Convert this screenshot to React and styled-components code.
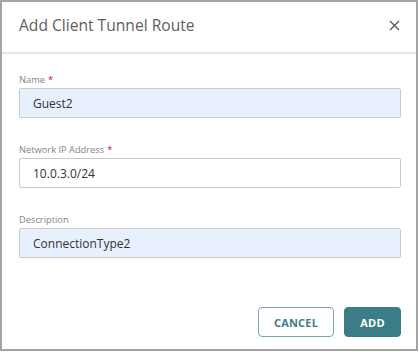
import React from "react";
import styled, { createGlobalStyle } from "styled-components";

const Global = createGlobalStyle`
  html, body { margin: 0; padding: 0; background: #ffffff; }
  body { font-family: "Open Sans", "Noto Sans", sans-serif; }
  * { box-sizing: border-box; }
`;

const Dialog = styled.div`
  width: 418px;
  height: 351px;
  border: 2px solid #a4a4a4;
  background: #fff;
  display: flex;
  flex-direction: column;
`;

const Header = styled.div`
  height: 52px;
  border-bottom: 2px solid #e6e6e6;
  display: flex;
  align-items: center;
  justify-content: space-between;
  padding: 0 14px 4px 17px;
  flex-shrink: 0;
`;

const Title = styled.h1`
  margin: 0;
  font-size: 15.6px;
  font-weight: 400;
  color: #5e5e5e;
`;

const Close = styled.button`
  border: none;
  background: none;
  padding: 0;
  width: 16px;
  height: 16px;
  display: flex;
  align-items: center;
  justify-content: center;
  cursor: pointer;
`;

const Body = styled.div`
  flex: 1;
  display: flex;
  flex-direction: column;
  padding: 19px 15px 0 17px;
`;

const Field = styled.div`
  display: flex;
  flex-direction: column;
  gap: 1px;
  margin-bottom: 25px;
`;

const Label = styled.label`
  font-size: 9.3px;
  line-height: 14px;
  color: #858585;
`;

const Star = styled.span`
  color: #d0021b;
  margin-left: 3px;
`;

const Input = styled.div`
  height: 30px;
  border: 1px solid #c9c9c9;
  border-radius: 2px;
  background: ${(p) => (p.$filled ? "#e8f0fe" : "#ffffff")};
  display: flex;
  align-items: center;
  padding-left: 13px;
  font-size: 12px;
  color: #333;
`;

const Footer = styled.div`
  display: flex;
  justify-content: flex-end;
  gap: 10px;
  padding: 0 15px 0 0;
  margin-top: 24px;
`;

const Button = styled.button`
  height: 30px;
  padding: 0;
  width: ${(p) => p.$w}px;
  border-radius: 4px;
  font-family: "Open Sans", "Noto Sans", sans-serif;
  font-weight: 700;
  font-size: 11px;
  letter-spacing: 0.2px;
  border: 1px solid ${(p) => (p.$primary ? "#3b7d86" : "#78a9b0")};
  background: ${(p) => (p.$primary ? "#3b7d86" : "#ffffff")};
  color: ${(p) => (p.$primary ? "#ffffff" : "#3b7d86")};
  cursor: pointer;
`;

const Spacer = styled.div`
  height: 12px;
`;

export default function App() {
  return (
    <>
      <Global />
      <Dialog>
        <Header>
          <Title>Add Client Tunnel Route</Title>
          <Close aria-label="Close">
            <svg width="11" height="11" viewBox="0 0 11 11">
              <path d="M1 1L10 10M10 1L1 10" stroke="#555" strokeWidth="1.3" fill="none" />
            </svg>
          </Close>
        </Header>
        <Body>
          <Field>
            <Label>
              Name<Star>*</Star>
            </Label>
            <Input $filled>Guest2</Input>
          </Field>
          <Field>
            <Label>
              Network IP Address<Star>*</Star>
            </Label>
            <Input>10.0.3.0/24</Input>
          </Field>
          <Field>
            <Label>Description</Label>
            <Input $filled>ConnectionType2</Input>
          </Field>
        </Body>
        <Footer>
          <Button $w={76}>CANCEL</Button>
          <Button $primary $w={57}>ADD</Button>
        </Footer>
        <Spacer />
      </Dialog>
    </>
  );
}
